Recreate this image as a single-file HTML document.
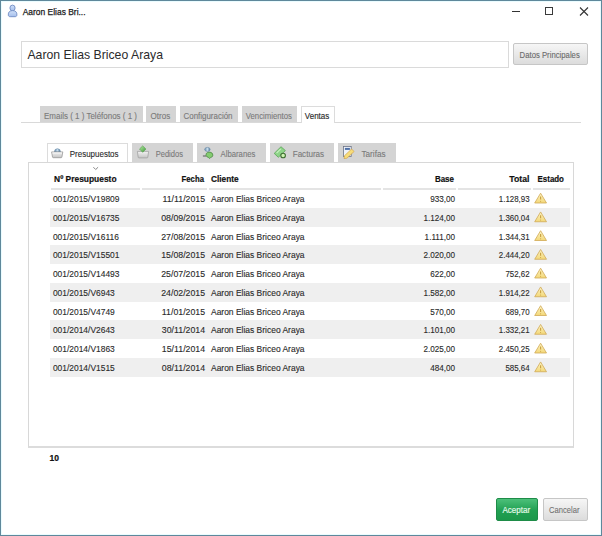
<!DOCTYPE html>
<html><head><meta charset="utf-8">
<style>
html,body{margin:0;padding:0;}
body{width:602px;height:536px;position:relative;overflow:hidden;background:#fff;font-family:"Liberation Sans",sans-serif;}
.abs{position:absolute;}
.win{position:absolute;left:0;top:0;width:600px;height:534px;border:1px solid #5f889b;box-shadow:inset 0 0 0 1px #eafcff;}
.namebox{position:absolute;left:21px;top:41px;width:486px;height:25px;border:1px solid #dadada;background:#fff;}
.btn{position:absolute;box-sizing:border-box;border:1px solid #c6c6c6;border-radius:2px;background:linear-gradient(#f6f6f6,#dcdcdc);}
.t1{position:absolute;top:106px;height:16px;background:#d4d4d4;box-sizing:border-box;}
.t2{position:absolute;top:143px;height:19px;background:#d4d4d4;box-sizing:border-box;}
.t2 svg{position:absolute;top:3px;}
.sel{background:#fff;border:1px solid #dcdcdc;border-bottom:none;}
.panel{position:absolute;left:28px;top:162px;width:544px;height:283px;border:1px solid #d8d8d8;border-bottom:2px solid #dcdcdc;background:#fff;}
.hl{position:absolute;top:188px;height:1.5px;background:#e4e4e4;}
.txt{position:absolute;left:0;top:0;}
</style></head><body>
<div class="win"></div>
<div class="abs" style="left:512px;top:11px;width:8px;height:1px;background:#333"></div>
<div class="abs" style="left:545px;top:7px;width:6px;height:6px;border:1px solid #3a3a3a"></div>
<svg class="abs" style="left:579px;top:7px" width="10" height="9" viewBox="0 0 10 9"><path d="M1 0.5 L9 8.5 M9 0.5 L1 8.5" stroke="#333" stroke-width="1.1"/></svg>

<div class="namebox"></div>
<div class="btn" style="left:513px;top:43px;width:75px;height:22px;"></div>

<div class="abs" style="left:21px;top:122px;width:560px;height:1px;background:#d9d9d9"></div>
<div class="t1" style="left:40px;width:102.7px;"></div>
<div class="t1" style="left:145.9px;width:29.9px;"></div>
<div class="t1" style="left:179.5px;width:58.3px;"></div>
<div class="t1" style="left:241.6px;width:55.4px;"></div>
<div class="t1 sel" style="left:301px;width:34px;height:17px;"></div>

<div class="panel"></div>
<div class="t2 sel" style="left:47px;width:81px;height:19px;"></div>
<div class="t2" style="left:132px;width:61px;"></div>
<div class="t2" style="left:197px;width:69px;"></div>
<div class="t2" style="left:270px;width:64px;"></div>
<div class="t2" style="left:338px;width:58px;"></div>

<div class="hl" style="left:51px;width:89px"></div>
<div class="hl" style="left:141.5px;width:65.5px"></div>
<div class="hl" style="left:208.5px;width:172.5px"></div>
<div class="hl" style="left:383px;width:73px"></div>
<div class="hl" style="left:458px;width:73px"></div>
<div class="hl" style="left:533px;width:36.5px"></div>
<div class="abs" style="left:49.5px;top:207.75px;width:520px;height:18.75px;background:#efefef"></div><div class="abs" style="left:49.5px;top:245.25px;width:520px;height:18.75px;background:#efefef"></div><div class="abs" style="left:49.5px;top:282.75px;width:520px;height:18.75px;background:#efefef"></div><div class="abs" style="left:49.5px;top:320.25px;width:520px;height:18.75px;background:#efefef"></div><div class="abs" style="left:49.5px;top:357.75px;width:520px;height:18.75px;background:#efefef"></div>

<div class="btn" style="left:496px;top:498px;width:42px;height:23px;border-color:#1e8c48;background:linear-gradient(#4cc07a,#21a052 55%,#1c984b);"></div>
<div class="btn" style="left:543px;top:498px;width:45px;height:23px;"></div>

<svg class="txt" width="602" height="536" font-family="Liberation Sans">

<defs>
 <linearGradient id="pg" x1="0" y1="0" x2="0" y2="1"><stop offset="0" stop-color="#cfe0f8"/><stop offset="1" stop-color="#a6bfec"/></linearGradient>
 <linearGradient id="bk" x1="0" y1="0" x2="0" y2="1"><stop offset="0" stop-color="#f2f2f2"/><stop offset="1" stop-color="#c4c4c4"/></linearGradient>
 <linearGradient id="dm" x1="0" y1="0" x2="1" y2="0"><stop offset="0" stop-color="#6c8fae"/><stop offset="0.5" stop-color="#c6dcec"/><stop offset="1" stop-color="#5a7f9f"/></linearGradient>
 <linearGradient id="gm" x1="0" y1="0" x2="1" y2="1"><stop offset="0" stop-color="#b6eaa2"/><stop offset="1" stop-color="#3f9a3c"/></linearGradient>
 <linearGradient id="wy" x1="0" y1="0" x2="0" y2="1"><stop offset="0" stop-color="#fdf3c4"/><stop offset="1" stop-color="#f3d878"/></linearGradient>
</defs>
<g transform="translate(5,3)">
 <ellipse cx="7.5" cy="5" rx="2.6" ry="2.9" fill="url(#pg)" stroke="#6c88c0" stroke-width="0.85"/>
 <path d="M3.3 12 C3.1 9.2 4.6 7.6 7.6 7.6 C10.6 7.6 12.1 9.2 11.9 12 C11.8 13.3 11 13.7 10 13.7 L5.2 13.7 C4.2 13.7 3.4 13.3 3.3 12 Z" fill="url(#pg)" stroke="#6c88c0" stroke-width="0.85"/>
</g>
<g transform="translate(48,144)">
 <path d="M6.5 8 A2.95 3.3 0 0 1 12.4 8 Z" fill="url(#dm)" stroke="#5f84a4" stroke-width="0.6"/>
 <path d="M3.6 7.9 L14.8 7.9 L13.9 13.1 Q13.7 13.7 13.1 13.7 L5.3 13.7 Q4.7 13.7 4.5 13.1 Z" fill="url(#bk)" stroke="#8e8e8e" stroke-width="0.7"/>
 <path d="M4.4 9 L14 9" stroke="#fafafa" stroke-width="0.8"/>
</g>
<g transform="translate(134,144)">
 <path d="M3.4 7.4 L14.6 7.4 L13.8 13.3 Q13.6 13.9 13 13.9 L5 13.9 Q4.4 13.9 4.2 13.3 Z" fill="url(#bk)" stroke="#9a9a9a" stroke-width="0.7"/>
 <path d="M8.7 1.9 L11.9 5 L8.7 8.3 L5.5 5 Z" fill="url(#gm)" stroke="#4e9a44" stroke-width="0.6" stroke-linejoin="round"/>
</g>
<g transform="translate(199,144)">
 <ellipse cx="8.4" cy="5.4" rx="2.7" ry="2" fill="url(#dm)" stroke="#5f84a4" stroke-width="0.6"/>
 <path d="M3.9 12 L7.2 12" stroke="#5a5a5a" stroke-width="1"/>
 <path d="M7.2 9.6 Q8.5 7.8 11 8.1 Q13.8 8.6 13.9 11.1 Q13.9 13 11.6 13.6 L10.4 14.5 L9.6 13.5 Q7.3 13 7 11.3 Z" fill="#84cc70" stroke="#3f7d36" stroke-width="0.7" stroke-linejoin="round"/>
</g>
<g transform="translate(271,144)">
 <path d="M3.2 9.4 L10 2.7 L14.4 6.6 L7.3 13.3 Z" fill="#8ed488" stroke="#4f9d4a" stroke-width="0.7" stroke-linejoin="round"/>
 <path d="M5.6 9 L9.8 4.9" stroke="#c4f0bc" stroke-width="1.2"/>
 <circle cx="12.1" cy="11.5" r="2.3" fill="#cdf3b2" stroke="#3f6f33" stroke-width="1.1"/>
</g>
<g transform="translate(339,144)">
 <rect x="4.4" y="2.4" width="7.8" height="10" fill="#eef2fa" stroke="#6c7486" stroke-width="0.8"/>
 <rect x="5.9" y="3.9" width="5" height="2" fill="#4f70a6"/>
 <path d="M5.4 11.8 L12.6 5 L15.1 7.5 L7.9 14.2 L5 14.6 Z" fill="#f6dc7a" stroke="#cf9a40" stroke-width="0.6" stroke-linejoin="round"/>
</g>
<path d="M93.4 167.2 L95.7 169.5 L98.1 167.2" fill="none" stroke="#7a7a7a" stroke-width="0.9"/>
<g transform="translate(534.40,192.60)"><path d="M6.2 0.6 L12.1 10.4 L0.3 10.4 Z" fill="url(#wy)" stroke="#d0aa55" stroke-width="0.8" stroke-linejoin="round"/><path d="M6.2 3.8 L6.2 7" stroke="#c8a040" stroke-width="1.1"/><circle cx="6.2" cy="8.6" r="0.55" fill="#c8a040"/></g><g transform="translate(534.40,211.35)"><path d="M6.2 0.6 L12.1 10.4 L0.3 10.4 Z" fill="url(#wy)" stroke="#d0aa55" stroke-width="0.8" stroke-linejoin="round"/><path d="M6.2 3.8 L6.2 7" stroke="#c8a040" stroke-width="1.1"/><circle cx="6.2" cy="8.6" r="0.55" fill="#c8a040"/></g><g transform="translate(534.40,230.10)"><path d="M6.2 0.6 L12.1 10.4 L0.3 10.4 Z" fill="url(#wy)" stroke="#d0aa55" stroke-width="0.8" stroke-linejoin="round"/><path d="M6.2 3.8 L6.2 7" stroke="#c8a040" stroke-width="1.1"/><circle cx="6.2" cy="8.6" r="0.55" fill="#c8a040"/></g><g transform="translate(534.40,248.85)"><path d="M6.2 0.6 L12.1 10.4 L0.3 10.4 Z" fill="url(#wy)" stroke="#d0aa55" stroke-width="0.8" stroke-linejoin="round"/><path d="M6.2 3.8 L6.2 7" stroke="#c8a040" stroke-width="1.1"/><circle cx="6.2" cy="8.6" r="0.55" fill="#c8a040"/></g><g transform="translate(534.40,267.60)"><path d="M6.2 0.6 L12.1 10.4 L0.3 10.4 Z" fill="url(#wy)" stroke="#d0aa55" stroke-width="0.8" stroke-linejoin="round"/><path d="M6.2 3.8 L6.2 7" stroke="#c8a040" stroke-width="1.1"/><circle cx="6.2" cy="8.6" r="0.55" fill="#c8a040"/></g><g transform="translate(534.40,286.35)"><path d="M6.2 0.6 L12.1 10.4 L0.3 10.4 Z" fill="url(#wy)" stroke="#d0aa55" stroke-width="0.8" stroke-linejoin="round"/><path d="M6.2 3.8 L6.2 7" stroke="#c8a040" stroke-width="1.1"/><circle cx="6.2" cy="8.6" r="0.55" fill="#c8a040"/></g><g transform="translate(534.40,305.10)"><path d="M6.2 0.6 L12.1 10.4 L0.3 10.4 Z" fill="url(#wy)" stroke="#d0aa55" stroke-width="0.8" stroke-linejoin="round"/><path d="M6.2 3.8 L6.2 7" stroke="#c8a040" stroke-width="1.1"/><circle cx="6.2" cy="8.6" r="0.55" fill="#c8a040"/></g><g transform="translate(534.40,323.85)"><path d="M6.2 0.6 L12.1 10.4 L0.3 10.4 Z" fill="url(#wy)" stroke="#d0aa55" stroke-width="0.8" stroke-linejoin="round"/><path d="M6.2 3.8 L6.2 7" stroke="#c8a040" stroke-width="1.1"/><circle cx="6.2" cy="8.6" r="0.55" fill="#c8a040"/></g><g transform="translate(534.40,342.60)"><path d="M6.2 0.6 L12.1 10.4 L0.3 10.4 Z" fill="url(#wy)" stroke="#d0aa55" stroke-width="0.8" stroke-linejoin="round"/><path d="M6.2 3.8 L6.2 7" stroke="#c8a040" stroke-width="1.1"/><circle cx="6.2" cy="8.6" r="0.55" fill="#c8a040"/></g><g transform="translate(534.40,361.35)"><path d="M6.2 0.6 L12.1 10.4 L0.3 10.4 Z" fill="url(#wy)" stroke="#d0aa55" stroke-width="0.8" stroke-linejoin="round"/><path d="M6.2 3.8 L6.2 7" stroke="#c8a040" stroke-width="1.1"/><circle cx="6.2" cy="8.6" r="0.55" fill="#c8a040"/></g>
<text x="22.70" y="14.90" font-size="9" font-weight="400" fill="#1a1a1a" stroke="#1a1a1a" stroke-width="0.25" textLength="62.87" lengthAdjust="spacingAndGlyphs">Aaron Elias Bri...</text>
<text x="27.40" y="59.40" font-size="13.4" font-weight="400" fill="#2b2b2b" textLength="135.60" lengthAdjust="spacingAndGlyphs">Aaron Elias Briceo Araya</text>
<text x="519.60" y="58.00" font-size="9" font-weight="400" fill="#6a6a6a" stroke="#6a6a6a" stroke-width="0.1" textLength="60.17" lengthAdjust="spacingAndGlyphs">Datos Principales</text>
<text x="44.00" y="118.60" font-size="9" font-weight="400" fill="#7a7a7a" stroke="#7a7a7a" stroke-width="0.12" textLength="93.00" lengthAdjust="spacingAndGlyphs">Emails ( 1 ) Teléfonos ( 1 )</text>
<text x="150.50" y="118.60" font-size="9" font-weight="400" fill="#7a7a7a" stroke="#7a7a7a" stroke-width="0.12" textLength="19.75" lengthAdjust="spacingAndGlyphs">Otros</text>
<text x="183.50" y="118.60" font-size="9" font-weight="400" fill="#7a7a7a" stroke="#7a7a7a" stroke-width="0.12" textLength="49.00" lengthAdjust="spacingAndGlyphs">Configuración</text>
<text x="245.80" y="118.60" font-size="9" font-weight="400" fill="#7a7a7a" stroke="#7a7a7a" stroke-width="0.12" textLength="46.07" lengthAdjust="spacingAndGlyphs">Vencimientos</text>
<text x="304.80" y="118.60" font-size="9" font-weight="400" fill="#2a2a2a" stroke="#2a2a2a" stroke-width="0.15" textLength="24.46" lengthAdjust="spacingAndGlyphs">Ventas</text>
<text x="69.80" y="156.90" font-size="9" font-weight="400" fill="#2a2a2a" stroke="#2a2a2a" stroke-width="0.12" textLength="48.76" lengthAdjust="spacingAndGlyphs">Presupuestos</text>
<text x="155.70" y="156.90" font-size="9" font-weight="400" fill="#7a7a7a" stroke="#7a7a7a" stroke-width="0.12" textLength="27.28" lengthAdjust="spacingAndGlyphs">Pedidos</text>
<text x="220.60" y="156.90" font-size="9" font-weight="400" fill="#7a7a7a" stroke="#7a7a7a" stroke-width="0.12" textLength="34.77" lengthAdjust="spacingAndGlyphs">Albaranes</text>
<text x="292.70" y="156.90" font-size="9" font-weight="400" fill="#7a7a7a" stroke="#7a7a7a" stroke-width="0.12" textLength="31.45" lengthAdjust="spacingAndGlyphs">Facturas</text>
<text x="361.50" y="156.90" font-size="9" font-weight="400" fill="#7a7a7a" stroke="#7a7a7a" stroke-width="0.12" textLength="24.05" lengthAdjust="spacingAndGlyphs">Tarifas</text>
<text x="54.10" y="181.90" font-size="9" font-weight="700" fill="#111" stroke="#111" stroke-width="0.2" textLength="62.43" lengthAdjust="spacingAndGlyphs">Nº Presupuesto</text>
<text x="181.60" y="181.90" font-size="9" font-weight="700" fill="#111" stroke="#111" stroke-width="0.2" textLength="22.35" lengthAdjust="spacingAndGlyphs">Fecha</text>
<text x="211.00" y="181.90" font-size="9" font-weight="700" fill="#111" stroke="#111" stroke-width="0.2" textLength="27.70" lengthAdjust="spacingAndGlyphs">Cliente</text>
<text x="434.90" y="181.90" font-size="9" font-weight="700" fill="#111" stroke="#111" stroke-width="0.2" textLength="19.10" lengthAdjust="spacingAndGlyphs">Base</text>
<text x="509.30" y="181.90" font-size="9" font-weight="700" fill="#111" stroke="#111" stroke-width="0.2" textLength="20.18" lengthAdjust="spacingAndGlyphs">Total</text>
<text x="537.60" y="181.90" font-size="9" font-weight="700" fill="#111" stroke="#111" stroke-width="0.2" textLength="26.36" lengthAdjust="spacingAndGlyphs">Estado</text>
<text x="49.50" y="461.00" font-size="9" font-weight="700" fill="#111" stroke="#111" stroke-width="0.2" textLength="9.51" lengthAdjust="spacingAndGlyphs">10</text>
<text x="502.50" y="513.10" font-size="9.8" font-weight="400" fill="#e4fbe9" stroke="#e4fbe9" stroke-width="0.2" textLength="27.60" lengthAdjust="spacingAndGlyphs">Aceptar</text>
<text x="549.00" y="513.10" font-size="9.8" font-weight="400" fill="#707070" stroke="#707070" stroke-width="0.08" textLength="30.43" lengthAdjust="spacingAndGlyphs">Cancelar</text>
<text x="52.90" y="202.00" font-size="9.2" font-weight="400" fill="#2a2a2a" stroke="#2a2a2a" stroke-width="0.12" textLength="66.60" lengthAdjust="spacingAndGlyphs">001/2015/V19809</text>
<text x="162.50" y="202.00" font-size="9.2" font-weight="400" fill="#2a2a2a" stroke="#2a2a2a" stroke-width="0.12" textLength="42.60" lengthAdjust="spacingAndGlyphs">11/11/2015</text>
<text x="211.00" y="202.00" font-size="9.2" font-weight="400" fill="#2a2a2a" stroke="#2a2a2a" stroke-width="0.12" textLength="93.58" lengthAdjust="spacingAndGlyphs">Aaron Elias Briceo Araya</text>
<text x="430.20" y="202.00" font-size="9.2" font-weight="400" fill="#2a2a2a" stroke="#2a2a2a" stroke-width="0.12" textLength="24.90" lengthAdjust="spacingAndGlyphs">933,00</text>
<text x="498.80" y="202.00" font-size="9.2" font-weight="400" fill="#2a2a2a" stroke="#2a2a2a" stroke-width="0.12" textLength="30.79" lengthAdjust="spacingAndGlyphs">1.128,93</text>
<text x="52.90" y="220.75" font-size="9.2" font-weight="400" fill="#2a2a2a" stroke="#2a2a2a" stroke-width="0.12" textLength="66.60" lengthAdjust="spacingAndGlyphs">001/2015/V16735</text>
<text x="161.20" y="220.75" font-size="9.2" font-weight="400" fill="#2a2a2a" stroke="#2a2a2a" stroke-width="0.12" textLength="43.91" lengthAdjust="spacingAndGlyphs">08/09/2015</text>
<text x="211.00" y="220.75" font-size="9.2" font-weight="400" fill="#2a2a2a" stroke="#2a2a2a" stroke-width="0.12" textLength="93.58" lengthAdjust="spacingAndGlyphs">Aaron Elias Briceo Araya</text>
<text x="423.41" y="220.75" font-size="9.2" font-weight="400" fill="#2a2a2a" stroke="#2a2a2a" stroke-width="0.12" textLength="31.69" lengthAdjust="spacingAndGlyphs">1.124,00</text>
<text x="498.80" y="220.75" font-size="9.2" font-weight="400" fill="#2a2a2a" stroke="#2a2a2a" stroke-width="0.12" textLength="30.79" lengthAdjust="spacingAndGlyphs">1.360,04</text>
<text x="52.90" y="239.50" font-size="9.2" font-weight="400" fill="#2a2a2a" stroke="#2a2a2a" stroke-width="0.12" textLength="65.97" lengthAdjust="spacingAndGlyphs">001/2015/V16116</text>
<text x="161.20" y="239.50" font-size="9.2" font-weight="400" fill="#2a2a2a" stroke="#2a2a2a" stroke-width="0.12" textLength="43.91" lengthAdjust="spacingAndGlyphs">27/08/2015</text>
<text x="211.00" y="239.50" font-size="9.2" font-weight="400" fill="#2a2a2a" stroke="#2a2a2a" stroke-width="0.12" textLength="93.58" lengthAdjust="spacingAndGlyphs">Aaron Elias Briceo Araya</text>
<text x="424.62" y="239.50" font-size="9.2" font-weight="400" fill="#2a2a2a" stroke="#2a2a2a" stroke-width="0.12" textLength="30.48" lengthAdjust="spacingAndGlyphs">1.111,00</text>
<text x="498.80" y="239.50" font-size="9.2" font-weight="400" fill="#2a2a2a" stroke="#2a2a2a" stroke-width="0.12" textLength="30.79" lengthAdjust="spacingAndGlyphs">1.344,31</text>
<text x="52.90" y="258.25" font-size="9.2" font-weight="400" fill="#2a2a2a" stroke="#2a2a2a" stroke-width="0.12" textLength="66.60" lengthAdjust="spacingAndGlyphs">001/2015/V15501</text>
<text x="161.20" y="258.25" font-size="9.2" font-weight="400" fill="#2a2a2a" stroke="#2a2a2a" stroke-width="0.12" textLength="43.91" lengthAdjust="spacingAndGlyphs">15/08/2015</text>
<text x="211.00" y="258.25" font-size="9.2" font-weight="400" fill="#2a2a2a" stroke="#2a2a2a" stroke-width="0.12" textLength="93.58" lengthAdjust="spacingAndGlyphs">Aaron Elias Briceo Araya</text>
<text x="423.41" y="258.25" font-size="9.2" font-weight="400" fill="#2a2a2a" stroke="#2a2a2a" stroke-width="0.12" textLength="31.69" lengthAdjust="spacingAndGlyphs">2.020,00</text>
<text x="498.80" y="258.25" font-size="9.2" font-weight="400" fill="#2a2a2a" stroke="#2a2a2a" stroke-width="0.12" textLength="30.79" lengthAdjust="spacingAndGlyphs">2.444,20</text>
<text x="52.90" y="277.00" font-size="9.2" font-weight="400" fill="#2a2a2a" stroke="#2a2a2a" stroke-width="0.12" textLength="66.60" lengthAdjust="spacingAndGlyphs">001/2015/V14493</text>
<text x="161.20" y="277.00" font-size="9.2" font-weight="400" fill="#2a2a2a" stroke="#2a2a2a" stroke-width="0.12" textLength="43.91" lengthAdjust="spacingAndGlyphs">25/07/2015</text>
<text x="211.00" y="277.00" font-size="9.2" font-weight="400" fill="#2a2a2a" stroke="#2a2a2a" stroke-width="0.12" textLength="93.58" lengthAdjust="spacingAndGlyphs">Aaron Elias Briceo Araya</text>
<text x="430.20" y="277.00" font-size="9.2" font-weight="400" fill="#2a2a2a" stroke="#2a2a2a" stroke-width="0.12" textLength="24.90" lengthAdjust="spacingAndGlyphs">622,00</text>
<text x="505.40" y="277.00" font-size="9.2" font-weight="400" fill="#2a2a2a" stroke="#2a2a2a" stroke-width="0.12" textLength="24.20" lengthAdjust="spacingAndGlyphs">752,62</text>
<text x="52.90" y="295.75" font-size="9.2" font-weight="400" fill="#2a2a2a" stroke="#2a2a2a" stroke-width="0.12" textLength="61.91" lengthAdjust="spacingAndGlyphs">001/2015/V6943</text>
<text x="161.20" y="295.75" font-size="9.2" font-weight="400" fill="#2a2a2a" stroke="#2a2a2a" stroke-width="0.12" textLength="43.91" lengthAdjust="spacingAndGlyphs">24/02/2015</text>
<text x="211.00" y="295.75" font-size="9.2" font-weight="400" fill="#2a2a2a" stroke="#2a2a2a" stroke-width="0.12" textLength="93.58" lengthAdjust="spacingAndGlyphs">Aaron Elias Briceo Araya</text>
<text x="423.41" y="295.75" font-size="9.2" font-weight="400" fill="#2a2a2a" stroke="#2a2a2a" stroke-width="0.12" textLength="31.69" lengthAdjust="spacingAndGlyphs">1.582,00</text>
<text x="498.80" y="295.75" font-size="9.2" font-weight="400" fill="#2a2a2a" stroke="#2a2a2a" stroke-width="0.12" textLength="30.79" lengthAdjust="spacingAndGlyphs">1.914,22</text>
<text x="52.90" y="314.50" font-size="9.2" font-weight="400" fill="#2a2a2a" stroke="#2a2a2a" stroke-width="0.12" textLength="61.91" lengthAdjust="spacingAndGlyphs">001/2015/V4749</text>
<text x="161.85" y="314.50" font-size="9.2" font-weight="400" fill="#2a2a2a" stroke="#2a2a2a" stroke-width="0.12" textLength="43.26" lengthAdjust="spacingAndGlyphs">11/01/2015</text>
<text x="211.00" y="314.50" font-size="9.2" font-weight="400" fill="#2a2a2a" stroke="#2a2a2a" stroke-width="0.12" textLength="93.58" lengthAdjust="spacingAndGlyphs">Aaron Elias Briceo Araya</text>
<text x="430.20" y="314.50" font-size="9.2" font-weight="400" fill="#2a2a2a" stroke="#2a2a2a" stroke-width="0.12" textLength="24.90" lengthAdjust="spacingAndGlyphs">570,00</text>
<text x="505.40" y="314.50" font-size="9.2" font-weight="400" fill="#2a2a2a" stroke="#2a2a2a" stroke-width="0.12" textLength="24.20" lengthAdjust="spacingAndGlyphs">689,70</text>
<text x="52.90" y="333.25" font-size="9.2" font-weight="400" fill="#2a2a2a" stroke="#2a2a2a" stroke-width="0.12" textLength="61.91" lengthAdjust="spacingAndGlyphs">001/2014/V2643</text>
<text x="161.85" y="333.25" font-size="9.2" font-weight="400" fill="#2a2a2a" stroke="#2a2a2a" stroke-width="0.12" textLength="43.26" lengthAdjust="spacingAndGlyphs">30/11/2014</text>
<text x="211.00" y="333.25" font-size="9.2" font-weight="400" fill="#2a2a2a" stroke="#2a2a2a" stroke-width="0.12" textLength="93.58" lengthAdjust="spacingAndGlyphs">Aaron Elias Briceo Araya</text>
<text x="423.41" y="333.25" font-size="9.2" font-weight="400" fill="#2a2a2a" stroke="#2a2a2a" stroke-width="0.12" textLength="31.69" lengthAdjust="spacingAndGlyphs">1.101,00</text>
<text x="498.80" y="333.25" font-size="9.2" font-weight="400" fill="#2a2a2a" stroke="#2a2a2a" stroke-width="0.12" textLength="30.79" lengthAdjust="spacingAndGlyphs">1.332,21</text>
<text x="52.90" y="352.00" font-size="9.2" font-weight="400" fill="#2a2a2a" stroke="#2a2a2a" stroke-width="0.12" textLength="61.91" lengthAdjust="spacingAndGlyphs">001/2014/V1863</text>
<text x="161.85" y="352.00" font-size="9.2" font-weight="400" fill="#2a2a2a" stroke="#2a2a2a" stroke-width="0.12" textLength="43.26" lengthAdjust="spacingAndGlyphs">15/11/2014</text>
<text x="211.00" y="352.00" font-size="9.2" font-weight="400" fill="#2a2a2a" stroke="#2a2a2a" stroke-width="0.12" textLength="93.58" lengthAdjust="spacingAndGlyphs">Aaron Elias Briceo Araya</text>
<text x="423.41" y="352.00" font-size="9.2" font-weight="400" fill="#2a2a2a" stroke="#2a2a2a" stroke-width="0.12" textLength="31.69" lengthAdjust="spacingAndGlyphs">2.025,00</text>
<text x="498.80" y="352.00" font-size="9.2" font-weight="400" fill="#2a2a2a" stroke="#2a2a2a" stroke-width="0.12" textLength="30.79" lengthAdjust="spacingAndGlyphs">2.450,25</text>
<text x="52.90" y="370.75" font-size="9.2" font-weight="400" fill="#2a2a2a" stroke="#2a2a2a" stroke-width="0.12" textLength="61.91" lengthAdjust="spacingAndGlyphs">001/2014/V1515</text>
<text x="161.85" y="370.75" font-size="9.2" font-weight="400" fill="#2a2a2a" stroke="#2a2a2a" stroke-width="0.12" textLength="43.26" lengthAdjust="spacingAndGlyphs">08/11/2014</text>
<text x="211.00" y="370.75" font-size="9.2" font-weight="400" fill="#2a2a2a" stroke="#2a2a2a" stroke-width="0.12" textLength="93.58" lengthAdjust="spacingAndGlyphs">Aaron Elias Briceo Araya</text>
<text x="430.20" y="370.75" font-size="9.2" font-weight="400" fill="#2a2a2a" stroke="#2a2a2a" stroke-width="0.12" textLength="24.90" lengthAdjust="spacingAndGlyphs">484,00</text>
<text x="505.40" y="370.75" font-size="9.2" font-weight="400" fill="#2a2a2a" stroke="#2a2a2a" stroke-width="0.12" textLength="24.20" lengthAdjust="spacingAndGlyphs">585,64</text>
</svg>
</body></html>
